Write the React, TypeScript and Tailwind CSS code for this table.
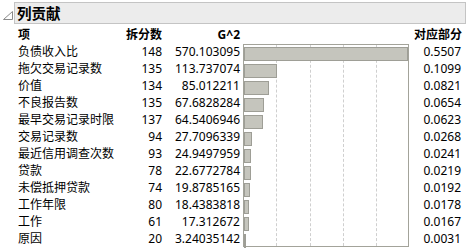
import React from "react";

const rows: [string, number, string, number][] = [
  ["负债收入比", 148, "570.103095", 0.5507],
  ["拖欠交易记录数", 135, "113.737074", 0.1099],
  ["价值", 134, "85.012211", 0.0821],
  ["不良报告数", 135, "67.6828284", 0.0654],
  ["最早交易记录时限", 137, "64.5406946", 0.0623],
  ["交易记录数", 94, "27.7096339", 0.0268],
  ["最近信用调查次数", 93, "24.9497959", 0.0241],
  ["贷款", 78, "22.6772784", 0.0219],
  ["未偿抵押贷款", 74, "19.8785165", 0.0192],
  ["工作年限", 80, "18.4383818", 0.0178],
  ["工作", 61, "17.312672", 0.0167],
  ["原因", 20, "3.24035142", 0.0031],
];

const CHART_W = 165;

export default function App() {
  return (
    <div
      className="w-[469px] h-[251px] bg-white text-[12px] text-black overflow-hidden"
      style={{ fontFamily: '"Noto Sans", "Noto Sans CJK SC", sans-serif' }}
    >
      <div className="flex items-start pt-[2px]">
        <div className="w-[14px] h-[22px] flex items-start">
          <svg width="14" height="22" viewBox="0 0 14 22">
            <path d="M12.5 9.5 L12.5 17.5 L3.5 17.5 Z" fill="none" stroke="#8a8a8a" strokeWidth="1" />
          </svg>
        </div>
        <div className="w-[452px] h-[22px] border border-[#c4c4c4] bg-[#ececec] flex items-center pl-[2px]">
          <span className="font-bold text-[14.5px] leading-none" style={{ fontFamily: '"Noto Sans CJK SC", sans-serif' }}>
            列贡献
          </span>
        </div>
      </div>

      <div className="grid grid-cols-[100px_44px_78px_169px_53px] pl-[18px] mt-[2px] leading-[17px]">
        <div className="col-start-1 h-[17px] font-bold">项</div>
        <div className="col-start-2 h-[17px] font-bold text-right">拆分数</div>
        <div className="col-start-3 h-[17px] font-bold text-right">G^2</div>
        <div className="col-start-5 h-[17px] font-bold text-right">对应部分</div>

        <div className="col-start-4 row-start-2 row-span-12 pl-[3px]">
          <div className="relative w-[166px] h-[203px] mt-[1px] border border-[#a3a39a] bg-white flex flex-col pt-[1px]">
            {[1, 2, 3, 4].map((i) => (
              <div
                key={i}
                className="absolute top-0 bottom-0 border-l border-dashed border-[#cfcfcf]"
                style={{ left: i * 33.3 - 1 }}
              />
            ))}
            {rows.map((r) => (
              <div key={r[0]} className="h-[17px] shrink-0 flex items-start pt-[1px] relative">
                <div
                  className="h-[14px] bg-[#c5c5bd] border border-[#9e9e96] box-border"
                  style={{ width: Math.max(2, Math.round((r[3] / 0.5507) * CHART_W)) }}
                />
              </div>
            ))}
          </div>
        </div>

        {rows.map((r, i) => (
          <React.Fragment key={r[0]}>
            <div className="col-start-1 h-[17px] whitespace-nowrap" style={{ gridRowStart: i + 2 }}>
              {r[0]}
            </div>
            <div className="col-start-2 h-[17px] text-right" style={{ gridRowStart: i + 2 }}>
              {r[1]}
            </div>
            <div className="col-start-3 h-[17px] text-right" style={{ gridRowStart: i + 2 }}>
              {r[2]}
            </div>
            <div className="col-start-5 h-[17px] text-right pr-[1px]" style={{ gridRowStart: i + 2 }}>
              {r[3].toFixed(4)}
            </div>
          </React.Fragment>
        ))}
      </div>
    </div>
  );
}
